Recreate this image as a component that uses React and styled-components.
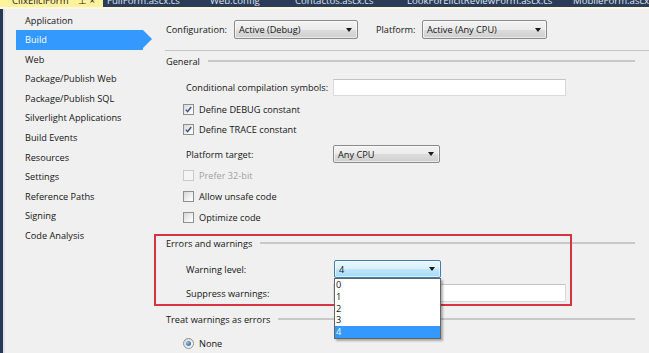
import React from 'react';
import styled, { createGlobalStyle, css } from 'styled-components';

const GlobalStyle = createGlobalStyle`
    html, body {
        margin: 0;
        padding: 0;
        background: #f0f0f0;
    }

    body {
        font-family: "Open Sans", "Noto Sans", sans-serif;
        font-size: 9.2px;
        color: #151515;
    }

    #root {
        width: 649px;
        height: 353px;
        overflow: hidden;
    }
`

const Window = styled.div`
    display: flex;
    flex-direction: column;
    width: 649px;
    height: 353px;
    background: #f0f0f0;
    overflow: hidden;
`

const TabStrip = styled.div`
    display: flex;
    height: 7px;
    background: #2b3b58;
    border-bottom: 2px solid #fbf7e0;
    overflow: hidden;
    flex-shrink: 0;
`

const Tab = styled.div`
    flex-shrink: 0;
    width: ${(props) => props.$w}px;
    padding-left: ${(props) => props.$pad || 4}px;
    box-sizing: border-box;
    color: #dfe6f2;
    white-space: nowrap;

    ${({ $active }) => $active && css`
        background: #fff29d;
        color: #1e1e1e;
    `}
`

const TabLabel = styled.div`
    display: flex;
    gap: 8px;
    margin-top: -5px;
    line-height: 11px;
    font-size: 9.6px;
`

const Body = styled.div`
    display: flex;
    flex: 1;
    min-height: 0;
`

const SideBorder = styled.div`
    width: 3px;
    background: #293955;
    border-right: 2px solid #dfe2e8;
    flex-shrink: 0;
`

const Nav = styled.ul`
    display: grid;
    grid-auto-rows: 19.6px;
    align-content: start;
    width: 150px;
    margin: 0;
    padding: 1.5px 0 0;
    list-style: none;
    flex-shrink: 0;
`

const NavItem = styled.li`
    position: relative;
    width: 127px;
    margin-left: 11px;
    padding-left: 9px;
    box-sizing: border-box;
    line-height: 19.6px;
    white-space: nowrap;

    ${({ $active }) => $active && css`
        background: #3399ff;
        color: #ffffff;

        &::after {
            content: "";
            position: absolute;
            top: 0;
            right: -9px;
            border-top: 9.8px solid transparent;
            border-bottom: 9.8px solid transparent;
            border-left: 9px solid #3399ff;
        }
    `}
`

const Main = styled.div`
    display: flex;
    flex-direction: column;
    flex: 1;
    padding-left: 10px;
`

const ConfigBar = styled.div`
    display: flex;
    align-items: center;
    height: 19px;
    margin-top: 11px;
    padding-left: 1px;
`

const Label = styled.span`
    flex-shrink: 0;
    width: ${(props) => props.$w ? `${props.$w}px` : 'auto'};
    margin-left: ${(props) => props.$ml || 0}px;
    white-space: nowrap;
    color: ${(props) => props.$disabled ? '#a2a2a2' : 'inherit'};
`

const ComboWrap = styled.div`
    position: relative;
    flex-shrink: 0;
`

const Combo = styled.div`
    display: flex;
    align-items: center;
    justify-content: space-between;
    width: ${(props) => props.$w}px;
    height: ${(props) => props.$h || 18}px;
    padding: 0 4px 0 4px;
    box-sizing: border-box;
    border: 1px solid #8a8a8a;
    border-radius: 2px;
    background: linear-gradient(#f3f3f3 0%, #ebebeb 50%, #dddddd 51%, #cfcfcf 100%);
    box-shadow: inset 0 0 0 1px rgba(255, 255, 255, 0.6);

    ${({ $focused }) => $focused && css`
        border-color: #3c7fb1;
        background: linear-gradient(#eaf6fd 0%, #d9f0fc 50%, #bee6fd 51%, #a7d9f5 100%);
    `}
`

const Arrow = styled.span`
    width: 0;
    height: 0;
    border-left: 3.5px solid transparent;
    border-right: 3.5px solid transparent;
    border-top: 4px solid #1a1a1a;
    margin-right: 1px;
`

const DropList = styled.ul`
    position: absolute;
    top: 100%;
    left: 0;
    z-index: 3;
    width: 107px;
    margin: 0;
    padding: 0;
    list-style: none;
    background: #ffffff;
    border: 1px solid #646464;
    box-sizing: border-box;
    box-shadow: 2px 2px 2px rgba(0, 0, 0, 0.3);
`

const DropItem = styled.li`
    height: 11.8px;
    line-height: 11.8px;
    padding-left: 1px;

    ${({ $active }) => $active && css`
        background: #3399ff;
        color: #ffffff;
    `}
`

const Rule = styled.div`
    height: 1px;
    margin-top: 11px;
    background: #c4c4c4;
`

const SectionHeader = styled.div`
    display: flex;
    align-items: center;
    height: 20px;
    margin-top: ${(props) => props.$mt || 0}px;
    margin-right: 14px;
    padding-left: 1px;
    white-space: nowrap;

    &::after {
        content: "";
        flex: 1;
        height: 2px;
        margin-left: 8px;
        background: #c8c8c8;
    }
`

const FieldRow = styled.div`
    display: flex;
    align-items: center;
    height: ${(props) => props.$h || 18}px;
    margin-top: ${(props) => props.$mt || 0}px;
    padding-left: 21px;
`

const TextBox = styled.div`
    width: 233px;
    height: ${(props) => props.$h || 18}px;
    box-sizing: border-box;
    background: #ffffff;
    border: 1px solid #dadada;
    border-top-color: #c3c3c3;
`

const CheckRow = styled.div`
    display: flex;
    align-items: center;
    gap: 5px;
    height: 20px;
    margin-top: ${(props) => props.$mt || 0}px;
    padding-left: 18px;
`

const Box = styled.span`
    display: flex;
    align-items: center;
    justify-content: center;
    width: 11px;
    height: 11px;
    box-sizing: border-box;
    border: 1px solid ${(props) => props.$disabled ? '#cacaca' : '#8e8f8f'};
    background: ${(props) => props.$disabled
        ? '#f4f4f4'
        : 'linear-gradient(135deg, #d6d6d6 0%, #f6f6f6 70%, #ffffff 100%)'};
    flex-shrink: 0;
`

const RadioDot = styled.span`
    display: flex;
    align-items: center;
    justify-content: center;
    width: 11px;
    height: 11px;
    box-sizing: border-box;
    border-radius: 50%;
    border: 1px solid #8e8f8f;
    background: linear-gradient(135deg, #d6d6d6, #ffffff);
    flex-shrink: 0;

    &::after {
        content: "";
        width: 5px;
        height: 5px;
        border-radius: 50%;
        background: radial-gradient(circle at 35% 35%, #8ec3ea, #1f4f86);
    }
`

const Section = styled.div`
    position: relative;
    display: flex;
    flex-direction: column;
`

const Callout = styled.div`
    position: absolute;
    top: 7px;
    left: -11px;
    width: 418px;
    height: 72px;
    box-sizing: border-box;
    border: 2px solid #d7343f;
    z-index: 2;
    pointer-events: none;
`

const CheckBox = ({ checked, disabled, children }) => (
    <>
        <Box $disabled={disabled}>
            {checked && (
                <svg width="9" height="9" viewBox="0 0 9 9">
                    <path d="M1.8 4.6 L3.6 6.6 L7.2 2" fill="none" stroke="#3b4e7e" strokeWidth="1.4" />
                </svg>
            )}
        </Box>
        <Label $disabled={disabled}>{children}</Label>
    </>
);

const navItems = [
    'Application', 'Build', 'Web', 'Package/Publish Web', 'Package/Publish SQL',
    'Silverlight Applications', 'Build Events', 'Resources', 'Settings',
    'Reference Paths', 'Signing', 'Code Analysis'
];

const tabs = [
    { name: 'ClixEliciForm', w: 103, pad: 12, active: true },
    { name: 'FullForm.ascx.cs', w: 103 },
    { name: 'Web.config', w: 85 },
    { name: 'Contactos.ascx.cs', w: 112 },
    { name: 'LookForElicitReviewForm.ascx.cs', w: 166 },
    { name: 'MobileForm.ascx.cs', w: 120 }
];

const App = () => (
    <Window>
        <GlobalStyle />
        <TabStrip>
            {tabs.map((tab) => (
                <Tab key={tab.name} $w={tab.w} $pad={tab.pad} $active={tab.active}>
                    <TabLabel>
                        <span style={tab.active ? { width: 58 } : undefined}>{tab.name}</span>
                        {tab.active && <span>⊥ ×</span>}
                    </TabLabel>
                </Tab>
            ))}
        </TabStrip>
        <Body>
            <SideBorder />
            <Nav>
                {navItems.map((item) => (
                    <NavItem key={item} $active={item === 'Build'}>{item}</NavItem>
                ))}
            </Nav>
            <Main>
                <ConfigBar>
                    <Label $w={68}>Configuration:</Label>
                    <Combo $w={124} $h={19}>Active (Debug)<Arrow /></Combo>
                    <Label $w={46} $ml={18}>Platform:</Label>
                    <Combo $w={125} $h={19}>Active (Any CPU)<Arrow /></Combo>
                </ConfigBar>
                <Rule />
                <SectionHeader>General</SectionHeader>
                <FieldRow $mt={8} $h={17}>
                    <Label $w={147}>Conditional compilation symbols:</Label>
                    <TextBox $h={17} />
                </FieldRow>
                <CheckRow $mt={3}><CheckBox checked>Define DEBUG constant</CheckBox></CheckRow>
                <CheckRow><CheckBox checked>Define TRACE constant</CheckBox></CheckRow>
                <FieldRow $mt={6}>
                    <Label $w={147}>Platform target:</Label>
                    <Combo $w={107}>Any CPU<Arrow /></Combo>
                </FieldRow>
                <CheckRow $mt={2}><CheckBox disabled>Prefer 32-bit</CheckBox></CheckRow>
                <CheckRow $mt={1}><CheckBox>Allow unsafe code</CheckBox></CheckRow>
                <CheckRow $mt={1}><CheckBox>Optimize code</CheckBox></CheckRow>
                <Section>
                    <Callout />
                    <SectionHeader $mt={6}>Errors and warnings</SectionHeader>
                    <FieldRow $mt={7}>
                        <Label $w={148}>Warning level:</Label>
                        <ComboWrap>
                            <Combo $w={107} $focused>4<Arrow /></Combo>
                            <DropList>
                                {['0', '1', '2', '3', '4'].map((level) => (
                                    <DropItem key={level} $active={level === '4'}>{level}</DropItem>
                                ))}
                            </DropList>
                        </ComboWrap>
                    </FieldRow>
                    <FieldRow $mt={6}>
                        <Label $w={147}>Suppress warnings:</Label>
                        <TextBox />
                    </FieldRow>
                </Section>
                <SectionHeader $mt={7}>Treat warnings as errors</SectionHeader>
                <CheckRow $mt={4}>
                    <RadioDot />
                    <Label>None</Label>
                </CheckRow>
            </Main>
        </Body>
    </Window>
);

export default App;
